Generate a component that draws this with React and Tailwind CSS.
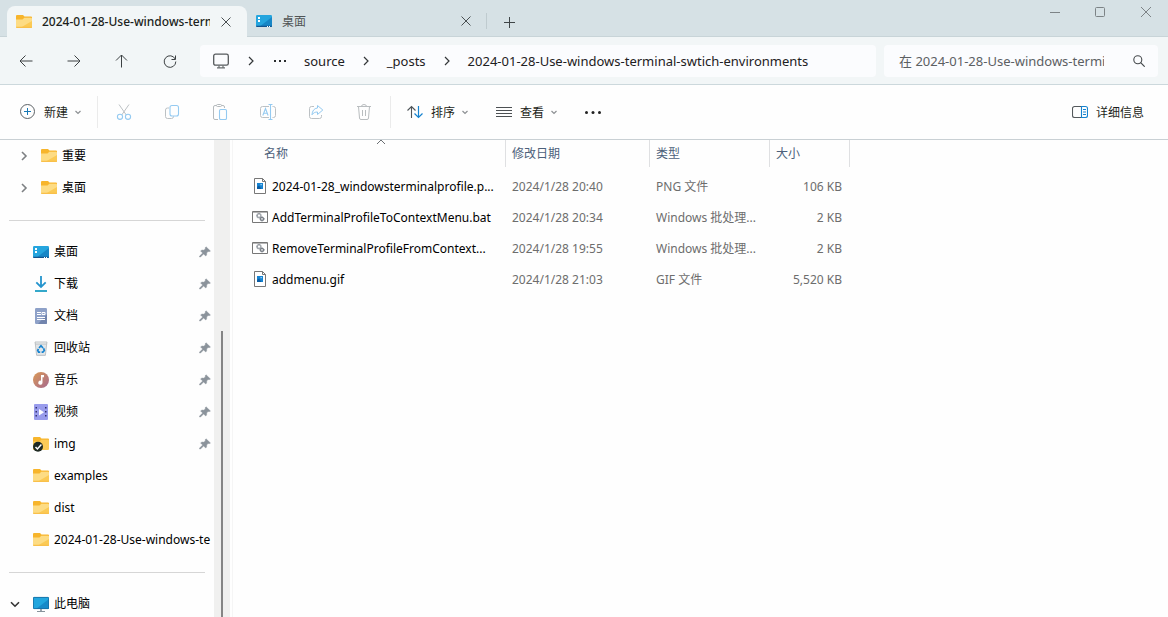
import React from "react";

const FONT = "font-['Noto_Sans','Noto_Sans_CJK_SC',sans-serif]";

function Svg({ size = 16, children, className = "" }) {
  return (
    <svg
      width={size}
      height={size}
      viewBox={`0 0 ${size} ${size}`}
      fill="none"
      aria-hidden="true"
      className={`block shrink-0 ${className}`}
    >
      {children}
    </svg>
  );
}

const FolderIcon = () => (
  <Svg>
    <path d="M0 2a1 1 0 0 1 1-1h6l1.500 1.500H15a1 1 0 0 1 1 1v4H0z" fill="#f7b52c" />
    <path d="M0 5.500h6.500L8.300 3.800H15a1 1 0 0 1 1 1V13a1 1 0 0 1-1 1H1a1 1 0 0 1-1-1z" fill="#fddc84" />
    <path d="M16 7v6a1 1 0 0 1-1 1H4z" fill="#fbca55" />
    <path d="M0 12.800V13a1 1 0 0 0 1 1h14a1 1 0 0 0 1-1v-.2z" fill="#f9c04a" />
  </Svg>
);

const CheckedFolderIcon = () => (
  <Svg>
    <path d="M0 2a1 1 0 0 1 1-1h6l1.500 1.500H15a1 1 0 0 1 1 1v4H0z" fill="#f7b52c" />
    <path d="M0 5.500h6.500L8.300 3.800H15a1 1 0 0 1 1 1V13a1 1 0 0 1-1 1H0z" fill="#fccb57" />
    <circle cx="5" cy="10.800" r="5" fill="#1f2a23" />
    <path d="m2.500 11 1.900 2 4-4.400" stroke="#fff" strokeWidth="1.500" />
  </Svg>
);

const DesktopIcon = () => (
  <Svg>
    <rect y="2" width="16" height="12" rx="1.2" fill="#25a5de" />
    <path d="M16 4v9a1 1 0 0 1-1 1H3z" fill="#1786c6" />
    <path d="M0 12.8h16a1.2 1.2 0 0 1-1.2 1.2H1.2A1.2 1.2 0 0 1 0 12.8z" fill="#12548f" />
    <path d="M2 4h2v2H2zM2 7h2v2H2z" fill="#fff" />
    <path d="M11 13h1v1h-1zM13 13h1v1h-1z" fill="#fff" />
  </Svg>
);

const DownloadIcon = () => (
  <Svg>
    <path d="M8 0v10.500M3.300 6.300 8 11l4.700-4.700" stroke="#2494cd" strokeWidth="1.800" />
    <path d="M2 15h12" stroke="#1e9fc4" strokeWidth="1.800" />
  </Svg>
);

const DocumentIcon = () => (
  <Svg>
    <rect x="2" width="12" height="16" rx="1.200" fill="#8ea1c8" />
    <path d="M14 6v9a1 1 0 0 1-1 1H5z" fill="#7184ad" />
    <path d="M4 4.500h4M4 6.500h4M4 9.500h8M4 11.500h8M9 4.500h3v2H9z" stroke="#fff" />
  </Svg>
);

const BinIcon = () => (
  <Svg>
    <path d="M2 2h12l-1.500 13a1 1 0 0 1-1 1h-7a1 1 0 0 1-1-1z" fill="#e3e6e8" />
    <path d="M2 2h12l-.3 2H2.300z" fill="#f4f5f5" stroke="#aeb4b8" strokeWidth=".8" />
    <path d="m2.300 4 1.300 11.300h8.800L13.700 4" stroke="#b2b8bc" strokeWidth=".8" />
    <path d="M6 8 8 5.800 10 8M10.600 8.300l.7 2.200-1.500 1.700H8.600M7.200 12.200H5.600l-.9-1.700.7-1.600" stroke="#1583d0" strokeWidth="1.700" />
  </Svg>
);

const MusicIcon = () => (
  <Svg>
    <defs>
      <linearGradient id="music" x1="0" y1="0" x2="1" y2="1">
        <stop offset="0" stopColor="#db9a55" />
        <stop offset="1" stopColor="#a5688f" />
      </linearGradient>
    </defs>
    <circle cx="8" cy="8" r="8" fill="url(#music)" />
    <path d="M8 3h3v2.200H9.500v5.500a2.100 2.100 0 1 1-1.500-2z" fill="#fff" />
  </Svg>
);

const VideoIcon = () => (
  <Svg>
    <rect x="1" width="14" height="16" rx="1" fill="#999cec" />
    <path d="M2.500 3H4v1.500H2.500zM2.500 7H4v1.500H2.500zM2.500 11H4v1.500H2.500zM12 3h1.500v1.500H12zM12 7h1.500v1.500H12zM12 11h1.500v1.500H12z" fill="#33306f" />
    <path d="m6 5 5 3.300L6 11.500z" fill="#fff" />
  </Svg>
);

const PcIcon = () => (
  <Svg>
    <rect y="1" width="16" height="12" rx="1" fill="#22a6de" />
    <path d="M16 3v9a1 1 0 0 1-1 1H3z" fill="#1789c8" />
    <rect x=".4" y="1.400" width="15.200" height="11.200" rx=".8" stroke="#166a9e" strokeWidth=".8" />
    <path d="M7 13h2v2H7z" fill="#9aa5ad" />
    <path d="M4 15.500h8" stroke="#87939b" />
  </Svg>
);

const ImageFileIcon = () => (
  <Svg>
    <path d="M2.500.5h8l3 3v12h-11z" fill="#fff" stroke="#777" />
    <path d="M10.500.5v3h3" stroke="#777" />
    <path d="M5 5h6v6H5z" fill="#1683d2" />
    <path d="m5 9 2-1.500L9.500 11H5z" fill="#0b5ca3" />
    <path d="M8.500 6h1.300v1.300H8.500z" fill="#a7d8f5" />
  </Svg>
);

const BatFileIcon = () => (
  <Svg>
    <path d="M.5 2.500h15v11H.5z" fill="#fff" stroke="#777" />
    <path d="M1 3.500h14" stroke="#b5b5b5" />
    <circle cx="7" cy="6.700" r="1.900" stroke="#a3a8ae" strokeWidth="1.500" />
    <circle cx="10" cy="9.900" r="1.500" stroke="#777d85" strokeWidth="1.400" />
    <path d="M7 4v1M4.500 6.700h1M10 7.300v1M10 11.600v1M12 9.900h1M7.300 9.900h1" stroke="#8b9097" />
  </Svg>
);

const PinIcon = () => (
  <Svg size={12}>
    <path d="M7 .8 11.400 5c-.8.700-1.700.7-2.400.4L7.600 7c.3 1.200 0 2.200-.8 3L4.600 7.900 1.500 11H.6v-.9l3.100-3.100L1.600 4.900c.9-.8 1.900-1 3.100-.7L6.400 3C6.100 2.200 6.300 1.400 7 .8z" fill="#8b939b" stroke="#8b939b" strokeWidth=".5" />
  </Svg>
);

const Chevron = ({ dir = "right", color = "#5f6368", small = false, thin = false }) => {
  const paths = {
    right: "M4 2l4 4-4 4",
    down: small ? "m3.500 5 2.500 2.500L8.500 5" : "M2 4.200 6 8.200l4-4",
    up: "m2 8 4-4 4 4",
  };
  return (
    <Svg size={12}>
      <path d={paths[dir]} stroke={color} strokeWidth={dir === "up" ? 1 : small || thin ? 1.2 : 1.6} />
    </Svg>
  );
};

const CloseIcon = () => (
  <Svg size={12}>
    <path d="m1.500 1.500 9 9m0-9-9 9" stroke="#4a5052" />
  </Svg>
);

function NavButton({ label, children }) {
  return (
    <button aria-label={label} className="flex h-8 w-8 items-center justify-center rounded">
      {children}
    </button>
  );
}

function Crumb({ children }) {
  return <button className="whitespace-nowrap pt-0.5">{children}</button>;
}

function TitleBar() {
  return (
    <header className="flex h-[37px] shrink-0 bg-[linear-gradient(to_top,#c8d4d8_1px,#d6e1e5_1px)] pl-[7px]">
      <div role="tablist" aria-label="标签页" className="flex pt-[6px]">
        <div className="flex h-[31px] w-[240px] items-center rounded-t-lg bg-[#f2f6f7] pl-[9px]">
          <FolderIcon />
          <button role="tab" aria-selected="true" className="ml-[10px] w-[168px] overflow-hidden whitespace-nowrap text-left text-[12px] font-medium text-[#1c1f20]">
            2024-01-28-Use-windows-term
          </button>
          <button aria-label="关闭标签页" className="ml-[10px]">
            <CloseIcon />
          </button>
        </div>
        <div className="flex h-[30px] w-[240px] items-center pl-[9px]">
          <DesktopIcon />
          <button role="tab" aria-selected="false" className="ml-[10px] w-[164px] pt-0.5 text-left text-[12px] text-[#505456]">
            桌面
          </button>
          <button aria-label="关闭标签页" className="ml-[14px]">
            <CloseIcon />
          </button>
          <span className="ml-[14px] h-4 w-px bg-[#bfcbcf]" />
        </div>
        <button aria-label="新建标签页" className="ml-4 flex h-[31px] items-center">
          <Svg size={12}>
            <path d="M6.500 1v11M1 6.500h11" stroke="#3f4547" />
          </Svg>
        </button>
      </div>
      <div className="ml-auto flex h-6 text-[#7d8386]">
        <button aria-label="最小化" className="flex w-[45px] items-center justify-center">
          <Svg size={12}><path d="M0 6.500h10" stroke="currentColor" /></Svg>
        </button>
        <button aria-label="最大化" className="flex w-[45px] items-center justify-center">
          <Svg size={12}><rect x=".5" y="1.500" width="9" height="9" rx="1" stroke="currentColor" /></Svg>
        </button>
        <button aria-label="关闭" className="flex w-[45px] items-center justify-center">
          <Svg size={12}><path d="m1 1 10 10M11 1 1 11" stroke="currentColor" /></Svg>
        </button>
      </div>
    </header>
  );
}

function AddressRow() {
  return (
    <div className="flex h-[48px] shrink-0 items-center border-b border-[#ccd8dc] bg-[#f2f6f7] pl-[10px] pr-[10px]">
      <div className="flex gap-4 pr-[14px]">
        <NavButton label="后退">
          <Svg><path d="M14.500 8H2m5.500-5.500L2 8l5.500 5.500" stroke="#3c4143" /></Svg>
        </NavButton>
        <NavButton label="前进">
          <Svg><path d="M1.500 8H14M8.500 2.500 14 8l-5.500 5.500" stroke="#3c4143" /></Svg>
        </NavButton>
        <NavButton label="向上">
          <Svg><path d="M7.500 14.500V2M2 7.500 7.500 2 13 7.500" stroke="#3c4143" /></Svg>
        </NavButton>
        <NavButton label="刷新">
          <Svg><path d="M13.200 6A5.800 5.800 0 1 0 13.800 8.500M13.500 2.500v4h-4" stroke="#3c4143" /></Svg>
        </NavButton>
      </div>
      <nav aria-label="地址栏" className="flex h-8 min-w-0 flex-1 items-center rounded bg-[#fbfcfe] pl-[13px] text-[13px] text-[#1d2022]">
        <Svg>
          <rect x=".7" y="1.200" width="14.600" height="11" rx="1.800" stroke="#55595c" strokeWidth="1.300" />
          <path d="M6 12.500v2m4-2v2M4 14.800h8" stroke="#6a6e70" strokeWidth="1.200" />
        </Svg>
        <span className="mx-4"><Chevron thin color="#333739" /></span>
        <button aria-label="更多路径" className="ml-px mr-[18px]">
          <Svg size={12}>
            <path d="M0 5h2v2H0zM5 5h2v2H5zM10 5h2v2h-2z" fill="#2a2d2f" />
          </Svg>
        </button>
        <Crumb>source</Crumb>
        <span className="mx-[15px]"><Chevron thin color="#333739" /></span>
        <Crumb>_posts</Crumb>
        <span className="mx-[15px]"><Chevron thin color="#333739" /></span>
        <Crumb>2024-01-28-Use-windows-terminal-swtich-environments</Crumb>
      </nav>
      <div className="ml-2 flex h-8 w-[274px] items-center rounded bg-[#fbfcfe] pl-[15px]">
        <input
          type="search"
          aria-label="搜索"
          placeholder="在 2024-01-28-Use-windows-termi"
          className="w-[218px] bg-transparent pt-0.5 text-[13px] text-[#5c6063] outline-none placeholder:text-[#5c6063]"
        />
        <button aria-label="搜索" className="ml-4">
          <Svg size={12}>
            <circle cx="4.800" cy="4.800" r="4" stroke="#45494c" strokeWidth="1.100" />
            <path d="m7.700 7.700 4 4" stroke="#45494c" strokeWidth="1.200" />
          </Svg>
        </button>
      </div>
    </div>
  );
}

const tools = [
  {
    label: "剪切",
    icon: (
      <Svg>
        <path d="M3 .5 10.300 11M13 .5 5.700 11" stroke="#bcc1c4" />
        <circle cx="4" cy="12.800" r="2.600" stroke="#94caf1" strokeWidth="1.100" />
        <circle cx="12" cy="12.800" r="2.600" stroke="#94caf1" strokeWidth="1.100" />
      </Svg>
    ),
  },
  {
    label: "复制",
    icon: (
      <Svg>
        <path d="M5 4H3.500a2 2 0 0 0-2 2v6.500a2 2 0 0 0 2 2h4a2 2 0 0 0 2-2V12" stroke="#bcc1c4" />
        <rect x="6" y="1.500" width="8.500" height="10.500" rx="2" stroke="#94caf1" strokeWidth="1.100" />
      </Svg>
    ),
  },
  {
    label: "粘贴",
    icon: (
      <Svg>
        <path d="M6 15.500H3a1.500 1.500 0 0 1-1.500-1.500V3A1.500 1.500 0 0 1 3 1.500h1.500M9.500 1.500H11A1.500 1.500 0 0 1 12.500 3v1" stroke="#b5babd" />
        <rect x="4.500" y=".5" width="5" height="2" rx="1" stroke="#b5babd" />
        <rect x="7.500" y="5.500" width="7" height="10" rx="1.200" stroke="#94caf1" strokeWidth="1.100" />
      </Svg>
    ),
  },
  {
    label: "重命名",
    icon: (
      <Svg>
        <path d="M9 13.500H2.500a2 2 0 0 1-2-2v-7a2 2 0 0 1 2-2H9M12.500 2.500h1a2 2 0 0 1 2 2v7a2 2 0 0 1-2 2h-1" stroke="#bcc1c4" />
        <path d="M10.500 .5v15M8.500 .5h4M8.500 15.500h4M2.800 11.500 5.500 4.500l2.600 7M3.800 9.200h3.400" stroke="#94caf1" strokeWidth="1.100" />
      </Svg>
    ),
  },
  {
    label: "共享",
    icon: (
      <Svg>
        <path d="M6 2.500H3.500a2 2 0 0 0-2 2v8a2 2 0 0 0 2 2h8a2 2 0 0 0 2-2V11" stroke="#bcc1c4" />
        <path d="M9.500 1.500 14.800 6l-5.300 4.500V8C7 8 5.500 8.700 4 10.800 4.200 7 6 4.300 9.500 4z" stroke="#94caf1" strokeLinejoin="round" />
      </Svg>
    ),
  },
  {
    label: "删除",
    icon: (
      <Svg>
        <path d="M1 2.500h14M5.500 2.500a2.500 2 0 0 1 5 0M2.500 2.500l1 11.500a1.500 1.500 0 0 0 1.500 1.500h6a1.500 1.500 0 0 0 1.500-1.500l1-11.500M6.500 6v6M9.500 6v6" stroke="#b9bdbf" />
      </Svg>
    ),
  },
];

function MenuButton({ icon, label }) {
  return (
    <button className="flex items-center text-[12px] text-[#1d1f20]">
      {icon}
      <span className="ml-2 mr-1 whitespace-nowrap pt-px">{label}</span>
      <Chevron dir="down" small color="#8d9093" />
    </button>
  );
}

function Toolbar() {
  return (
    <div role="toolbar" aria-label="命令栏" className="flex h-[55px] shrink-0 items-center border-b border-[#c9d0d4] bg-[#fefefe] pl-5 pr-6">
      <MenuButton
        label="新建"
        icon={
          <Svg>
            <circle cx="7.500" cy="7.500" r="7" stroke="#5d6266" />
            <path d="M7.500 4v7M4 7.500h7" stroke="#1878b5" />
          </Svg>
        }
      />
      <span className="ml-[13px] h-8 w-px bg-[#ebebeb]" />
      <div className="ml-[18px] flex gap-8">
        {tools.map((t) => (
          <button key={t.label} aria-label={t.label} disabled>
            {t.icon}
          </button>
        ))}
      </div>
      <span className="ml-[18px] mr-4 h-8 w-px bg-[#ebebeb]" />
      <div className="flex items-center gap-[25px]">
        <MenuButton
          label="排序"
          icon={
            <Svg>
              <path d="M4.500 14V2.500M.5 6.500l4-4 4 4" stroke="#4f5559" strokeWidth="1.100" />
              <path d="M11.500 2v11.500M7.500 9.500l4 4 4-4" stroke="#1683cf" strokeWidth="1.200" />
            </Svg>
          }
        />
        <MenuButton
          label="查看"
          icon={
            <Svg>
              <path d="M0 3.500h16M0 6.500h16M0 9.500h16M0 12.500h16" stroke="#4c5053" />
            </Svg>
          }
        />
        <button aria-label="更多">
          <Svg>
            <circle cx="1.500" cy="8.500" r="1.500" fill="#222" />
            <circle cx="8" cy="8.500" r="1.500" fill="#222" />
            <circle cx="14.500" cy="8.500" r="1.500" fill="#222" />
          </Svg>
        </button>
      </div>
      <button className="ml-auto flex items-center gap-2 whitespace-nowrap text-[12px] text-[#1d1f20]">
        <Svg>
          <path d="M9.500 2.500h-7a2 2 0 0 0-2 2v7a2 2 0 0 0 2 2h7" stroke="#54595c" strokeWidth="1.100" />
          <path d="M9.500 2.500h4a2 2 0 0 1 2 2v7a2 2 0 0 1-2 2h-4zM11 5.500h3M11 8h3M11 10.500h3" stroke="#1683cf" strokeWidth="1.100" />
        </Svg>
        <span className="pt-px">详细信息</span>
      </button>
    </div>
  );
}

const pinned = [
  { name: "桌面", icon: <DesktopIcon />, pin: true },
  { name: "下载", icon: <DownloadIcon />, pin: true },
  { name: "文档", icon: <DocumentIcon />, pin: true },
  { name: "回收站", icon: <BinIcon />, pin: true },
  { name: "音乐", icon: <MusicIcon />, pin: true },
  { name: "视频", icon: <VideoIcon />, pin: true },
  { name: "img", icon: <CheckedFolderIcon />, pin: true },
  { name: "examples", icon: <FolderIcon /> },
  { name: "dist", icon: <FolderIcon /> },
  { name: "2024-01-28-Use-windows-te", icon: <FolderIcon /> },
];

function Divider() {
  return (
    <div className="flex h-8 items-center px-[9px]">
      <hr className="w-full border-[#d6d6d6]" />
    </div>
  );
}

function Sidebar() {
  return (
    <aside className="flex shrink-0">
      <nav aria-label="导航窗格" className="w-[214px] overflow-hidden text-[12px] text-black">
        {["重要", "桌面"].map((n) => (
          <button key={n} className="flex h-8 w-full items-center pl-[18px]">
            <Chevron color="#7d8083" />
            <span className="ml-[11px] mr-[5px]"><FolderIcon /></span>
            {n}
          </button>
        ))}
        <Divider />
        {pinned.map((p) => (
          <button key={p.name} className="flex h-8 w-full items-center pl-[33px]">
            {p.icon}
            <span className="ml-[5px] flex-1 overflow-hidden whitespace-nowrap text-left">{p.name}</span>
            {p.pin && <span className="mr-[3px]"><PinIcon /></span>}
          </button>
        ))}
        <Divider />
        <button className="flex h-8 w-full items-center pl-[9px]">
          <Chevron dir="down" color="#333" />
          <span className="ml-3 mr-[5px]"><PcIcon /></span>
          此电脑
        </button>
      </nav>
      <div className="flex w-4 justify-center bg-[#f0f0ef] pt-[191px]">
        <div className="w-0.5 bg-[#858585]" />
      </div>
      <div className="w-[3px] border-r border-[#f5f5f5]" />
    </aside>
  );
}

const files = [
  { name: "2024-01-28_windowsterminalprofile.p...", date: "2024/1/28 20:40", type: "PNG 文件", size: "106 KB", icon: <ImageFileIcon /> },
  { name: "AddTerminalProfileToContextMenu.bat", date: "2024/1/28 20:34", type: "Windows 批处理...", size: "2 KB", icon: <BatFileIcon /> },
  { name: "RemoveTerminalProfileFromContext...", date: "2024/1/28 19:55", type: "Windows 批处理...", size: "2 KB", icon: <BatFileIcon /> },
  { name: "addmenu.gif", date: "2024/1/28 21:03", type: "GIF 文件", size: "5,520 KB", icon: <ImageFileIcon /> },
];

function HeaderCell({ children, first = false }) {
  return (
    <th scope="col" className="p-0 align-top font-normal">
      <div className={`flex h-[27px] items-center border-r border-[#dfe0e2] ${first ? "pl-[31px]" : "pl-1.5"}`}>
        {children}
      </div>
    </th>
  );
}

function FileTable() {
  return (
    <main className="min-w-0 flex-1 overflow-hidden">
      <table className="w-[617px] table-fixed border-collapse text-left text-[12px]">
        <colgroup>
          <col className="w-[273px]" />
          <col className="w-[144px]" />
          <col className="w-[120px]" />
          <col className="w-[80px]" />
        </colgroup>
        <thead>
          <tr className="h-[31px] text-[#4c607a]">
            <HeaderCell first>
              <span className="flex-1">名称</span>
              <span className="-mt-1 mr-[118px] self-start"><Chevron dir="up" color="#6b6f73" /></span>
            </HeaderCell>
            <HeaderCell>修改日期</HeaderCell>
            <HeaderCell>类型</HeaderCell>
            <HeaderCell>大小</HeaderCell>
          </tr>
        </thead>
        <tbody className="whitespace-nowrap text-[#6d6d6d]">
          {files.map((f) => (
            <tr key={f.name} className="h-[31px]">
              <td className="p-0">
                <div className="flex items-center pl-[19px] text-black">
                  <span className="pb-0.5">{f.icon}</span>
                  <span className="ml-1">{f.name}</span>
                </div>
              </td>
              <td className="p-0 pl-1.5">{f.date}</td>
              <td className="p-0 pl-1.5">{f.type}</td>
              <td className="p-0 pr-2 text-right">{f.size}</td>
            </tr>
          ))}
        </tbody>
      </table>
    </main>
  );
}

export default function App() {
  return (
    <div className={`flex h-screen flex-col overflow-hidden bg-[#fefefe] ${FONT}`}>
      <TitleBar />
      <AddressRow />
      <Toolbar />
      <div className="flex min-h-0 flex-1">
        <Sidebar />
        <FileTable />
      </div>
    </div>
  );
}
